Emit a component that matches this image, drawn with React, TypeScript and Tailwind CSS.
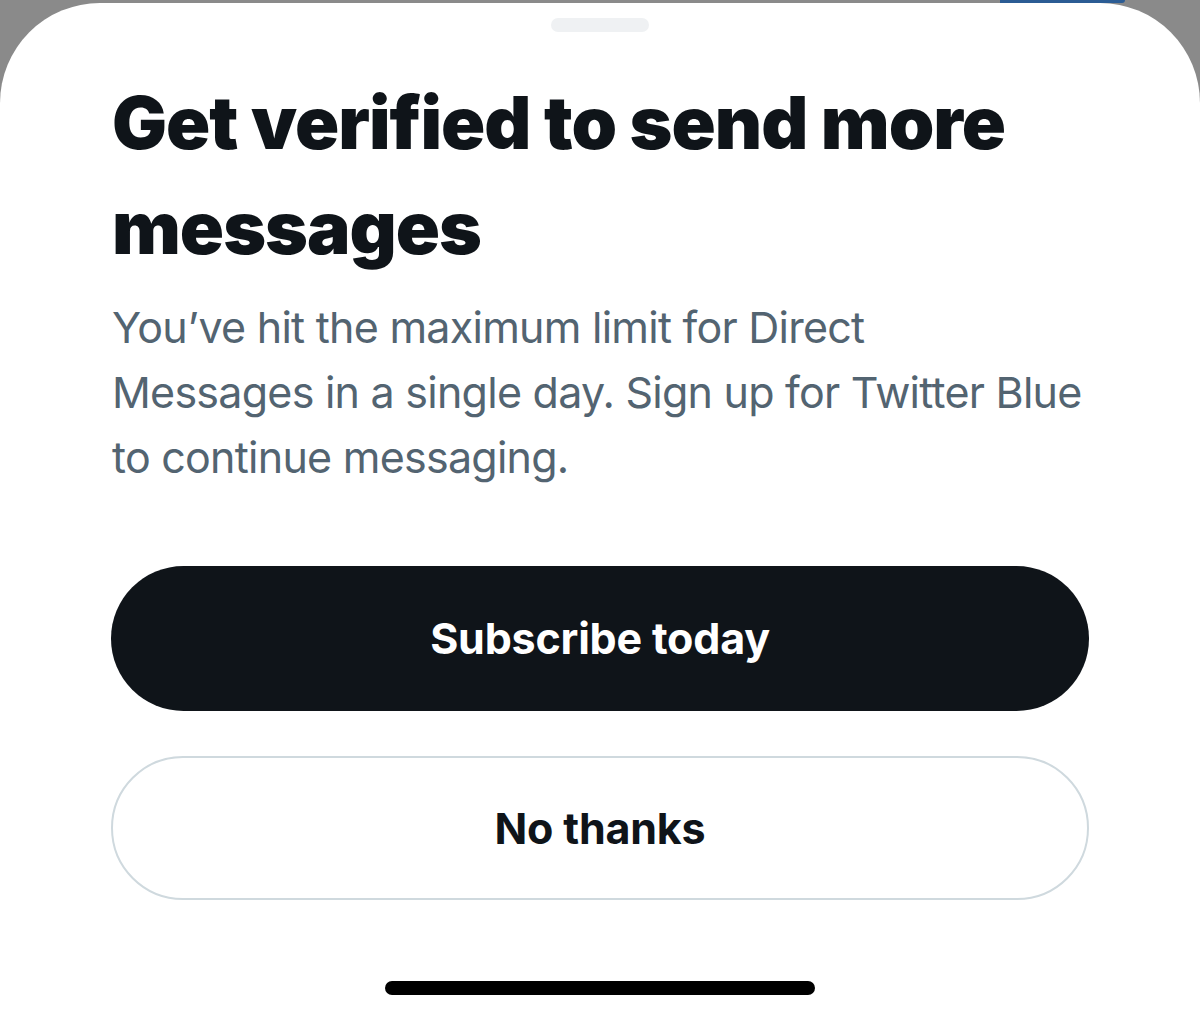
const App = () => {
    return (
        <div className="h-[1017px] w-[1200px] overflow-hidden bg-[#8a8a8a] flex flex-col" style={{ fontFamily: 'Inter, "Noto Sans", sans-serif' }}>
            <div className="h-[3px] flex shrink-0">
                <div className="w-[1000px]" />
                <div className="w-[125px] bg-[#2b5c94] rounded-br-[6px]" />
            </div>
            <div className="flex-1 bg-white rounded-t-[100px] flex flex-col">
                <div className="flex justify-center pt-[15px]">
                    <div className="w-[98px] h-[14px] rounded-full bg-[#eff1f3]" />
                </div>
                <div className="px-[112px] pt-[38px]">
                    <h1 className="text-[73px] leading-[105px] font-black text-[#0f1419] tracking-[-1px]">
                        Get verified to send more messages
                    </h1>
                    <p className="mt-[15px] text-[43px] leading-[65px] text-[#536471] tracking-[-0.75px] whitespace-nowrap">
                        <span className="block">You’ve hit the maximum limit for Direct</span>
                        <span className="block">Messages in a single day. Sign up for Twitter Blue</span>
                        <span className="block">to continue messaging.</span>
                    </p>
                </div>
                <div className="px-[111px] pt-[76px] flex flex-col gap-[45px]">
                    <button className="h-[145px] w-full rounded-full bg-[#0f1419] text-white text-[43px] font-bold tracking-[-0.2px]">
                        Subscribe today
                    </button>
                    <button className="h-[144px] w-full rounded-full border-2 border-[#cfd9de] bg-white text-[#0f1419] text-[43px] font-bold tracking-[-0.2px]">
                        No thanks
                    </button>
                </div>
                <div className="flex-1" />
                <div className="flex justify-center pb-[22px]">
                    <div className="w-[430px] h-[14px] rounded-full bg-black" />
                </div>
            </div>
        </div>
    );
};

export default App
